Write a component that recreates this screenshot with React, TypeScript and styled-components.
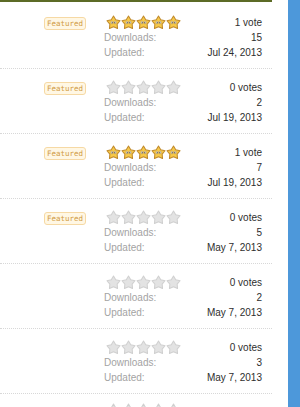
import React from "react";
import styled, { createGlobalStyle } from "styled-components";

const GlobalStyle = createGlobalStyle`
  html, body {
    margin: 0;
    padding: 0;
    background: #ffffff;
  }
  #root {
    height: 100vh;
    overflow: hidden;
  }
`;

type Resource = {
  id: number;
  featured: boolean;
  rated: boolean;
  votes: string;
  downloads: string;
  updated: string;
};

const resources: Resource[] = [
  { id: 1, featured: true, rated: true, votes: "1 vote", downloads: "15", updated: "Jul 24, 2013" },
  { id: 2, featured: true, rated: false, votes: "0 votes", downloads: "2", updated: "Jul 19, 2013" },
  { id: 3, featured: true, rated: true, votes: "1 vote", downloads: "7", updated: "Jul 19, 2013" },
  { id: 4, featured: true, rated: false, votes: "0 votes", downloads: "5", updated: "May 7, 2013" },
  { id: 5, featured: false, rated: false, votes: "0 votes", downloads: "2", updated: "May 7, 2013" },
  { id: 6, featured: false, rated: false, votes: "0 votes", downloads: "3", updated: "May 7, 2013" },
];

const STAR_PATH =
  "M8 1.6 L10.4 5.7 L15 6.7 L11.9 10.3 L12.3 15 L8 13.1 L3.7 15 L4.1 10.3 L1 6.7 L5.6 5.7 Z";

const Star = ({ on }: { on: boolean }) => (
  <svg width="15" height="16" viewBox="0 0 16 16">
    <path
      d={STAR_PATH}
      fill={on ? "#f7c948" : "#e3e3e3"}
      stroke={on ? "#c08a2c" : "#d0d0d0"}
      strokeWidth="1.1"
      strokeLinejoin="round"
    />
    {on && (
      <>
        <circle cx="6.4" cy="8.5" r="1.4" fill="#fff" stroke="#8a6a2a" strokeWidth="0.4" />
        <circle cx="9.6" cy="8.5" r="1.4" fill="#fff" stroke="#8a6a2a" strokeWidth="0.4" />
        <circle cx="6.6" cy="8.7" r="0.65" fill="#4a3a1a" />
        <circle cx="9.4" cy="8.7" r="0.65" fill="#4a3a1a" />
      </>
    )}
  </svg>
);

const ResourceRow = ({ item }: { item: Resource }) => (
  <Row>
    <BadgeCell>{item.featured && <Badge>Featured</Badge>}</BadgeCell>
    <Stats>
      <Line>
        <Stars>
          {[0, 1, 2, 3, 4].map((i) => (
            <Star key={i} on={item.rated} />
          ))}
        </Stars>
        <Value>{item.votes}</Value>
      </Line>
      <Line>
        <Label>Downloads:</Label>
        <Value>{item.downloads}</Value>
      </Line>
      <Line>
        <Label>Updated:</Label>
        <Value>{item.updated}</Value>
      </Line>
    </Stats>
  </Row>
);

const App = () => (
  <>
    <GlobalStyle />
    <Page>
      <Main>
        {resources.map((r) => (
          <ResourceRow key={r.id} item={r} />
        ))}
        <PeekRow>
          <Stars>
            {[0, 1, 2, 3, 4].map((i) => (
              <Star key={i} on={false} />
            ))}
          </Stars>
        </PeekRow>
      </Main>
      <Sidebar />
    </Page>
  </>
);

const Page = styled.div`
  display: flex;
  height: 100%;
  font-family: "Liberation Sans", Arial, sans-serif;
`;

const Main = styled.div`
  width: 272px;
  border-top: 2px solid #5c6b26;
  padding-top: 2px;
`;

const Sidebar = styled.div`
  width: 12px;
  margin-left: 16px;
  background: #4d98da;
`;

const Row = styled.div`
  display: flex;
  padding: 10px 0 8px;
  border-bottom: 1px dotted #d8d8d8;
`;

const PeekRow = styled.div`
  padding: 8px 0 0 104px;
`;

const BadgeCell = styled.div`
  width: 86px;
  display: flex;
  justify-content: flex-end;
  align-items: flex-start;
  padding-top: 3px;
`;

const Badge = styled.span`
  font-family: "DejaVu Sans Mono", monospace;
  font-size: 7.5px;
  line-height: 11px;
  color: #d09a3e;
  background: #fff7e4;
  border: 1px solid #f6d9a4;
  border-radius: 3px;
  padding: 0 2px;
`;

const Stats = styled.div`
  margin-left: 18px;
  width: 158px;
  display: flex;
  flex-direction: column;
`;

const Line = styled.div`
  display: flex;
  justify-content: space-between;
  align-items: center;
  height: 15px;
  font-size: 10px;

  &:first-child {
    height: 16px;
  }
`;

const Stars = styled.div`
  display: flex;
  margin-left: 2px;
`;

const Label = styled.span`
  color: #a3a3a3;
`;

const Value = styled.span`
  color: #2e2e2e;
`;

export default App;
